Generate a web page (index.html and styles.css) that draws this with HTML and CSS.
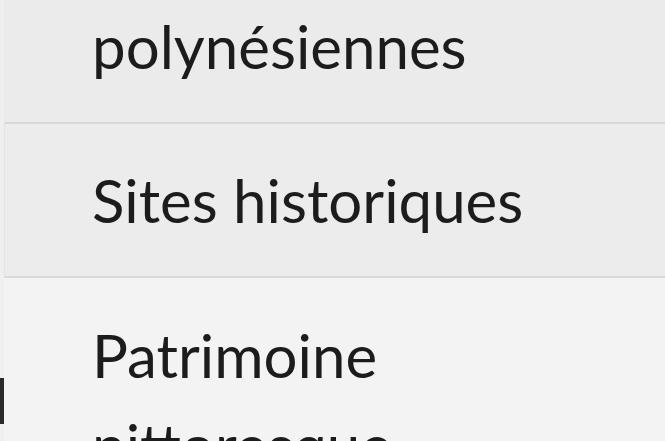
FILE: index.html
```html
<!DOCTYPE html>
<html lang="fr">
<head>
  <meta charset="UTF-8">
  <meta name="viewport" content="width=device-width, initial-scale=1.0">
  <title>Catégories</title>
  <link rel="stylesheet" href="styles.css">
</head>
<body>
  <div class="page">
    <div class="gutter">
      <span class="mark"></span>
    </div>
    <ul class="menu">
      <li class="item item-first">Traditions polynésiennes</li>
      <li class="item">Sites historiques</li>
      <li class="item item-last">Patrimoine pittoresque</li>
    </ul>
  </div>
</body>
</html>
```

FILE: styles.css
```css
html, body {
  margin: 0;
  padding: 0;
  height: 100%;
  overflow: hidden;
}
body {
  background-color: #f1eeee;
  font-family: Lato, "Noto Sans", sans-serif;
  color: #1c1c1c;
}
.page {
  display: flex;
  height: 100%;
}
.gutter {
  width: 4px;
  flex: none;
  display: flex;
  flex-direction: column;
}
.mark {
  display: block;
  width: 4px;
  height: 46px;
  margin-top: 378px;
  background-color: #2a2a2a;
}
.menu {
  flex: 1;
  list-style: none;
  margin: -121px 0 0 0;
  padding: 0;
}
.item {
  padding: 31px 40px 31px 87px;
  font-size: 60px;
  line-height: 90px;
  background-color: #edecec;
  border-bottom: 2px solid #d9d8d8;
  border-left: 1px solid #e4e2e2;
}
.item-first {
  padding-top: 32px;
  background-color: #ecebeb;
  border-left-color: #ecebeb;
}
.item-last {
  padding-top: 31px;
  background-color: #f3f3f3;
  border-top: 1px solid #f8f6f6;
  border-left-color: #f3f3f3;
  border-bottom: none;
}
```
